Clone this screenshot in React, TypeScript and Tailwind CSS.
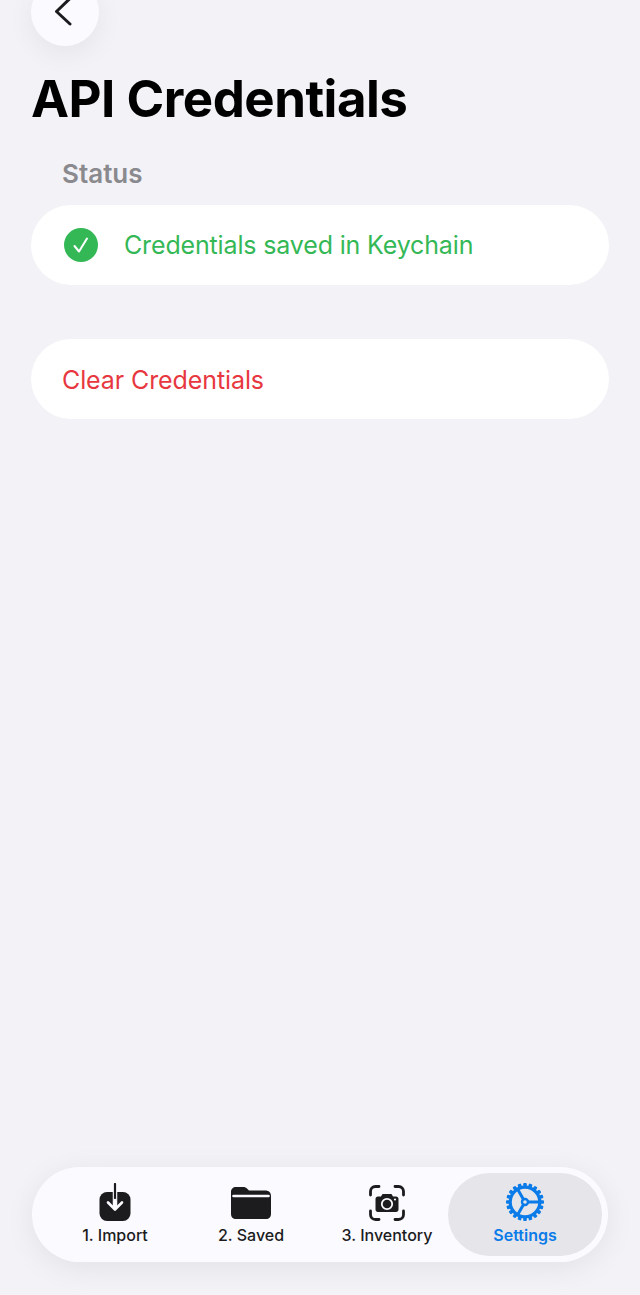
import React from 'react';

const ImportIcon = () => (
    <svg width="34" height="40" viewBox="0 0 34 40" fill="none">
        <rect x="1.500" y="9" width="31" height="29" rx="7.500" fill="#1c1c1e" />
        <path d="M17 1V24" stroke="#fbfbff" strokeWidth="4.500" />
        <path d="M17 1V18" stroke="#1c1c1e" strokeWidth="2.200" strokeLinecap="round" />
        <path d="M17 17V26" stroke="#fbfbff" strokeWidth="2.600" strokeLinecap="round" />
        <path d="M10 19.500L17 26.500L24 19.500" stroke="#fbfbff" strokeWidth="2.600" strokeLinecap="round" strokeLinejoin="round" />
    </svg>
);

const FolderIcon = () => (
    <svg width="42" height="34" viewBox="0 0 42 34" fill="none">
        <path d="M1 6C1 3 3 1 6 1H13C15 1 16 1.500 17.500 3L19 4.500H35C39 4.500 41 6.500 41 10.500V28C41 31 39 33 36 33H6C3 33 1 31 1 28V6Z" fill="#1c1c1e" />
        <path d="M3.500 10H38.500" stroke="#fbfbff" strokeWidth="2.600" strokeLinecap="round" />
    </svg>
);

const CameraIcon = () => (
    <svg width="36" height="36" viewBox="0 0 36 36" fill="none">
        <path d="M1.500 10V6.500C1.500 3.500 3.500 1.500 6.500 1.500H10M26 1.500H29.500C32.500 1.500 34.500 3.500 34.500 6.500V10M34.500 26V29.500C34.500 32.500 32.500 34.500 29.500 34.500H26M10 34.500H6.500C3.500 34.500 1.500 32.500 1.500 29.500V26" stroke="#1c1c1e" strokeWidth="2.800" strokeLinecap="round" />
        <path d="M9 11.500H12L13.500 9H22.500L24 11.500H27C28.500 11.500 29.500 12.500 29.500 14V24.500C29.500 26 28.500 27 27 27H9C7.500 27 6.500 26 6.500 24.500V14C6.500 12.500 7.500 11.500 9 11.500Z" fill="#1c1c1e" />
        <circle cx="18" cy="19" r="5.200" fill="#1c1c1e" stroke="#fbfbff" strokeWidth="1.800" />
        <circle cx="26" cy="14.500" r="1.100" fill="#fbfbff" />
    </svg>
);

// gear teeth are generated, the spokes meet in a small hub
const teeth = Array.from({ length: 20 }, (_, i) => (i * 360) / 20);

const GearIcon = () => (
    <svg width="40" height="40" viewBox="0 0 40 40" fill="none">
        {teeth.map((deg) => (
            <rect key={deg} x="18.200" y="1" width="3.600" height="5" rx="1" fill="#0a7be8" transform={`rotate(${deg} 20 20)`} />
        ))}
        <circle cx="20" cy="20" r="14.800" stroke="#0a7be8" strokeWidth="3.200" />
        <path d="M23 20H34M18.500 17.400L12.500 7M18.500 22.600L12.500 33" stroke="#0a7be8" strokeWidth="3" strokeLinecap="round" />
        <circle cx="20" cy="20" r="3" fill="#e5e5ea" stroke="#0a7be8" strokeWidth="2.400" />
    </svg>
);

const tabs = [
    { label: '1. Import', icon: <ImportIcon /> },
    { label: '2. Saved', icon: <FolderIcon /> },
    { label: '3. Inventory', icon: <CameraIcon /> },
];

export default function App() {
    return (
        <div className="relative flex h-[1295px] w-[640px] flex-col overflow-hidden bg-[#f2f2f7] px-[31px] font-['Inter',sans-serif]">
            <button className="-mt-[22px] flex h-[68px] w-[68px] shrink-0 items-center justify-center rounded-full bg-[#fbfbff] shadow-[0_8px_28px_rgba(0,0,0,0.06)]">
                <svg className="-ml-1" width="20" height="30" viewBox="0 0 20 30" fill="none">
                    <path d="M17 1.500L3.500 14.500L17 27" stroke="#1c1c1e" strokeWidth="3" strokeLinecap="round" strokeLinejoin="round" />
                </svg>
            </button>

            <h1 className="mt-[22px] h-[62px] text-[51px] leading-[62px] font-bold tracking-[-0.5px] text-black">
                API Credentials
            </h1>

            <p className="mt-[28px] pl-[31px] text-[26px] leading-8 font-semibold text-[#8a8a8e]">Status</p>

            <div className="mt-[15px] flex h-20 items-center rounded-[40px] bg-white pl-[33px]">
                <span className="flex h-[34px] w-[34px] items-center justify-center rounded-full bg-[#34b856]">
                    <svg width="18" height="18" viewBox="0 0 18 18" fill="none">
                        <path d="M2.500 10L7 15.500L15 2.500" stroke="white" strokeWidth="2" strokeLinecap="round" strokeLinejoin="round" />
                    </svg>
                </span>
                <span className="ml-[26px] pt-0.5 text-[25px] tracking-[-0.15px] text-[#34b856]">Credentials saved in Keychain</span>
            </div>

            <div className="mt-[54px] flex h-20 items-center rounded-[40px] bg-white pl-[31px]">
                <span className="pt-1 text-[25px] tracking-[-0.1px] text-[#e8383f]">Clear Credentials</span>
            </div>

            <nav className="mt-auto mb-[33px] ml-px flex h-[95px] w-[576px] items-center rounded-[48px] bg-[#fbfbff] pr-[6px] pl-[38px] shadow-[0_6px_30px_rgba(0,0,0,0.07)]">
                <div className="flex gap-[46px]">
                    {tabs.map((tab) => (
                        <div key={tab.label} className="flex h-[83px] w-[90px] flex-col items-center">
                            <div className="flex h-[52px] items-center justify-center pt-2">{tab.icon}</div>
                            <span className="text-[16px] leading-5 font-medium whitespace-nowrap text-[#1c1c1e]">{tab.label}</span>
                        </div>
                    ))}
                </div>
                <div className="ml-auto flex h-[83px] w-[154px] shrink-0 flex-col items-center rounded-[42px] bg-[#e5e5ea]">
                    <div className="flex h-[52px] items-center justify-center pt-1.5">
                        <GearIcon />
                    </div>
                    <span className="text-[16px] leading-5 font-semibold text-[#0a7be8]">Settings</span>
                </div>
            </nav>
        </div>
    );
}
